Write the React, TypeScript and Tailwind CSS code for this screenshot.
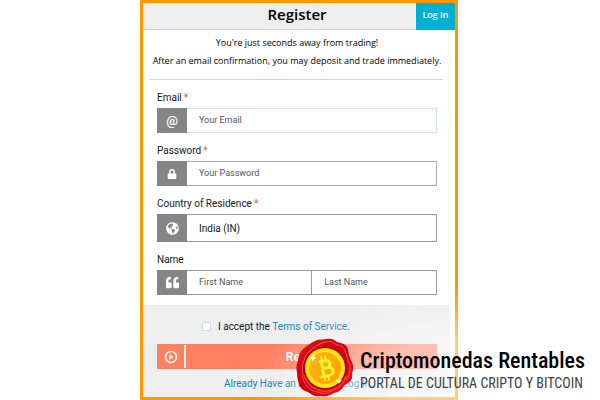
import React from 'react';
import { FaGlobeAmericas, FaLock, FaQuoteLeft } from 'react-icons/fa';

interface FieldProps {
  id: string;
  label: string;
  required?: boolean;
  icon: React.ReactNode;
  className: string;
  children: React.ReactNode;
}

const inputStyle = 'w-full min-w-0 bg-white pt-px pl-3 text-gray-900 placeholder-gray-600 outline-none';

const Field = ({ id, label, required, icon, className, children }: FieldProps) => {
  return (
    <div>
      <label htmlFor={id} className="block h-[18px] text-[10px] leading-[16px] text-gray-900">
        {label}
        {required && <span className="ml-[2px] text-[#f2502f]">*</span>}
      </label>
      <div className={`flex border ${className}`}>
        <span className="-my-px -ml-px flex w-[30px] shrink-0 items-center justify-center bg-[#858585] text-white">
          {icon}
        </span>
        {children}
      </div>
    </div>
  );
};

const Seal = () => {
  return (
    <svg viewBox="0 0 58 60" className="h-[60px] w-[58px] shrink-0" aria-hidden="true">
      <defs>
        <linearGradient id="coin" x1="0" y1="0" x2="1" y2="1">
          <stop offset="0" stopColor="#ffb51a" />
          <stop offset="1" stopColor="#ffa000" />
        </linearGradient>
        <linearGradient id="wax" x1="0" y1="0" x2="1" y2="1">
          <stop offset="0" stopColor="#e3121a" />
          <stop offset="0.5" stopColor="#c9000c" />
          <stop offset="1" stopColor="#f01822" />
        </linearGradient>
      </defs>
      <path
        d="M30 1c5-1 8 0 11 3 4 1 8 2 10 5 2 4 1 7 3 11 2 4 4 8 3 12-1 3-1 5-1 8-1 4-5 5-8 8-3 4-5 6-10 7-5 3-9 4-14 3-5 1-8-1-12-4-4-1-7-3-9-7-1-5-2-7-2-12-1-5-1-8 1-12 0-5 2-9 5-12 4-3 7-6 12-8 3-2 7-1 11-2z"
        fill="url(#wax)"
      />
      <path
        d="M30 4c5-2 8 1 11 3 4 0 7 2 8 6 2 4 2 8 4 12 2 5 1 8 0 12-1 4-5 6-8 9-3 4-6 6-10 7-5 3-9 3-13 1-5 0-8-3-11-6-3-4-5-7-4-12-1-5-1-9 1-13 1-5 3-8 7-11 4-4 9-7 15-8z"
        fill="none"
        stroke="#ff5158"
        strokeWidth="1"
      />
      <circle cx="29" cy="31" r="22" fill="#b20008" />
      <path d="M8 37c3 10 12 16 21 16 10 0 18-6 21-15" fill="none" stroke="#ff2a33" strokeWidth="2" />
      <circle cx="29" cy="30" r="20" fill="#ffe50f" />
      <circle cx="29" cy="30" r="16" fill="url(#coin)" />
      <g transform="rotate(-10 29 30)" fill="none" stroke="#fff02c" strokeWidth="3">
        <path d="M24 23h7c5 0 5 7 0 7h-4M27 30h5c6 0 6 8 0 8h-9M26.500 23v15" />
        <path d="M27 18v4M31 18v4M27 39v4M31 39v4" strokeWidth="2" />
      </g>
      <path d="M17 16l1 3 3 1-3 1-1 3-1-3-3-1 3-1zM43 40l1 2 2 1-2 1-1 2-1-2-2-1 2-1z" fill="#fff" />
    </svg>
  );
};

const App = () => {
  return (
    <main className="relative min-h-screen bg-white pr-[2px] font-['Roboto','Liberation_Sans',sans-serif]">
      <form className="mx-auto flex min-h-screen w-full max-w-[318px] flex-col border-[3px] border-[#ff9800] bg-white">
        <header className="relative flex h-[27px] items-center justify-center border-b border-gray-300 bg-[#eee] pr-1 font-['Open_Sans',sans-serif]">
          <h1 className="pb-1 text-[15px] font-semibold text-black">Register</h1>
          <button type="button" className="absolute top-0 right-0 h-[27px] w-[39px] bg-[#00b0d2] pb-1 text-[9px] font-semibold text-white">
            Log In
          </button>
        </header>

        <div className="mr-[12px] ml-[6px] h-[50px] border-b border-gray-300 pt-1 pl-[2px] text-center font-['Open_Sans',sans-serif] text-[9px] leading-[18px] whitespace-nowrap text-black">
          <p>You're just seconds away from trading!</p>
          <p>After an email confirmation, you may deposit and trade immediately.</p>
        </div>

        <div className="flex flex-col gap-[10px] pt-[10px] pr-[18px] pb-[10px] pl-[14px] text-[9px]">
          <Field id="email" label="Email" required className="h-[25px] border-[#cfe0ec]" icon={<span className="text-[13px] leading-none font-medium">@</span>}>
            <input id="email" type="email" placeholder="Your Email" className={inputStyle} />
          </Field>
          <Field id="password" label="Password" required className="h-[25px] border-[#aaa]" icon={<FaLock size={10} />}>
            <input id="password" type="password" placeholder="Your Password" className={inputStyle} />
          </Field>
          <Field id="country" label="Country of Residence" required className="h-[28px] border-[#999]" icon={<FaGlobeAmericas size={13} />}>
            <select id="country" className={`${inputStyle} appearance-none text-[10px]`}>
              <option>India (IN)</option>
            </select>
          </Field>
          <Field id="first-name" label="Name" className="h-[25px] border-[#999]" icon={<FaQuoteLeft size={13} />}>
            <input id="first-name" placeholder="First Name" className={inputStyle} />
            <input aria-label="Last Name" placeholder="Last Name" className={`${inputStyle} border-l border-[#999]`} />
          </Field>
        </div>

        <footer className="mr-[5px] flex grow flex-col bg-[#eee] pt-[14px] pr-[13px] pl-[14px]">
          <div className="flex h-[14px] items-center pl-[45px] text-[10px] text-gray-900">
            <input id="terms" type="checkbox" className="mr-[7px] size-[9px] appearance-none rounded-[2px] border border-gray-300 bg-white" />
            <label htmlFor="terms">I accept the&nbsp;</label>
            <a href="#terms" className="text-[#1683b4]">Terms of Service</a>.
          </div>
          <button type="submit" className="mt-[11px] flex h-[25px] items-stretch bg-[#ff8062] text-[12px] font-bold text-white">
            <span className="my-px flex w-[29px] items-center justify-center border-r-2 border-[#fff0ec]">
              <svg viewBox="0 0 14 14" className="size-[14px]" fill="none" stroke="white" aria-hidden="true">
                <circle cx="7" cy="7" r="5.500" strokeWidth="1.500" />
                <path d="M5.500 4.500v5L9.500 7z" fill="white" stroke="none" />
              </svg>
            </span>
            <span className="flex grow items-center justify-center pr-[6px]">Register</span>
          </button>
          <a href="#login" className="mt-2 text-center text-[10px] leading-[14px] text-[#1683b4]">
            Already Have an Account? Log In
          </a>
        </footer>
      </form>

      <aside className="absolute right-0 bottom-0 flex h-[110px] items-end bg-radial-[at_60%_80%] from-white/50 from-30% to-white/0 to-70% pr-[15px] pb-[2px] pl-10">
        <Seal />
        <div className="ml-[6px] pb-[6px] font-['Roboto_Condensed','Liberation_Sans_Narrow',sans-serif] whitespace-nowrap">
          <p className="text-[22px] leading-[26px] font-medium text-black">Criptomonedas Rentables</p>
          <p className="text-[14px] leading-[18px] text-[#404040]">PORTAL DE CULTURA CRIPTO Y BITCOIN</p>
        </div>
      </aside>
    </main>
  );
};

export default App;
